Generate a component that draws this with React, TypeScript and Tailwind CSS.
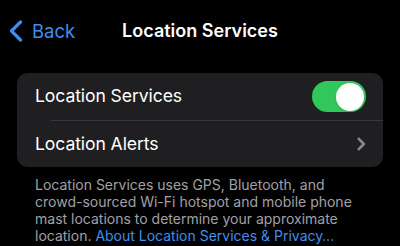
function Toggle({ on }: { on: boolean }) {
  return (
    <div
      className={`flex h-[31px] w-[54px] items-center rounded-full px-[2px] ${
        on ? "justify-end bg-[#32c75a]" : "justify-start bg-[#39393d]"
      }`}
    >
      <div className="h-[28px] w-[28px] rounded-full bg-white shadow" />
    </div>
  );
}

function BackChevron() {
  return (
    <svg width="14" height="22" viewBox="0 0 14 22" fill="none">
      <polyline
        points="11.5,2 2.5,11 11.5,20"
        stroke="currentColor"
        strokeWidth="3.2"
        strokeLinecap="round"
        strokeLinejoin="round"
      />
    </svg>
  );
}

function RowChevron() {
  return (
    <svg width="9" height="14" viewBox="0 0 9 14" fill="none">
      <polyline
        points="1.8,1.8 6.8,7 1.8,12.2"
        stroke="currentColor"
        strokeWidth="2.6"
        strokeLinecap="round"
        strokeLinejoin="round"
      />
    </svg>
  );
}

export default function App() {
  return (
    <div
      className="h-[246px] w-[400px] overflow-hidden bg-black text-white"
      style={{ fontFamily: "Inter, 'Noto Sans', sans-serif" }}
    >
      {/* nav bar */}
      <div className="relative flex h-[62px] items-center">
        <div className="flex items-center pl-[9px] text-[#3d8ef0]">
          <BackChevron />
          <span className="ml-[9px] text-[18.5px] leading-none">Back</span>
        </div>
        <div className="absolute inset-x-0 text-center text-[18px] font-semibold leading-none">
          Location Services
        </div>
      </div>

      {/* grouped list */}
      <div className="mx-[17px] mt-[11px] overflow-hidden rounded-[11px] bg-[#1f1f21]">
        <div className="flex h-[47px] items-center justify-between pl-[18px] pr-[17px]">
          <span className="text-[17.6px] tracking-[-0.1px]">Location Services</span>
          <Toggle on />
        </div>
        <div className="ml-[34px] h-px bg-[#38383a]" />
        <div className="flex h-[46px] items-center justify-between pl-[18px] pr-[17px]">
          <span className="text-[17.6px] tracking-[-0.1px]">Location Alerts</span>
          <span className="text-[#88888d]">
            <RowChevron />
          </span>
        </div>
      </div>

      {/* footer */}
      <p className="mt-[9px] px-[35px] text-[14px] leading-[17px] text-[#a0a0a6]">
        Location Services uses GPS, Bluetooth, and
        <br />
        crowd-sourced Wi-Fi hotspot and mobile phone
        <br />
        mast locations to determine your approximate
        <br />
        location. <span className="text-[#3f8ff0]">About Location Services &amp; Privacy…</span>
      </p>
    </div>
  );
}
